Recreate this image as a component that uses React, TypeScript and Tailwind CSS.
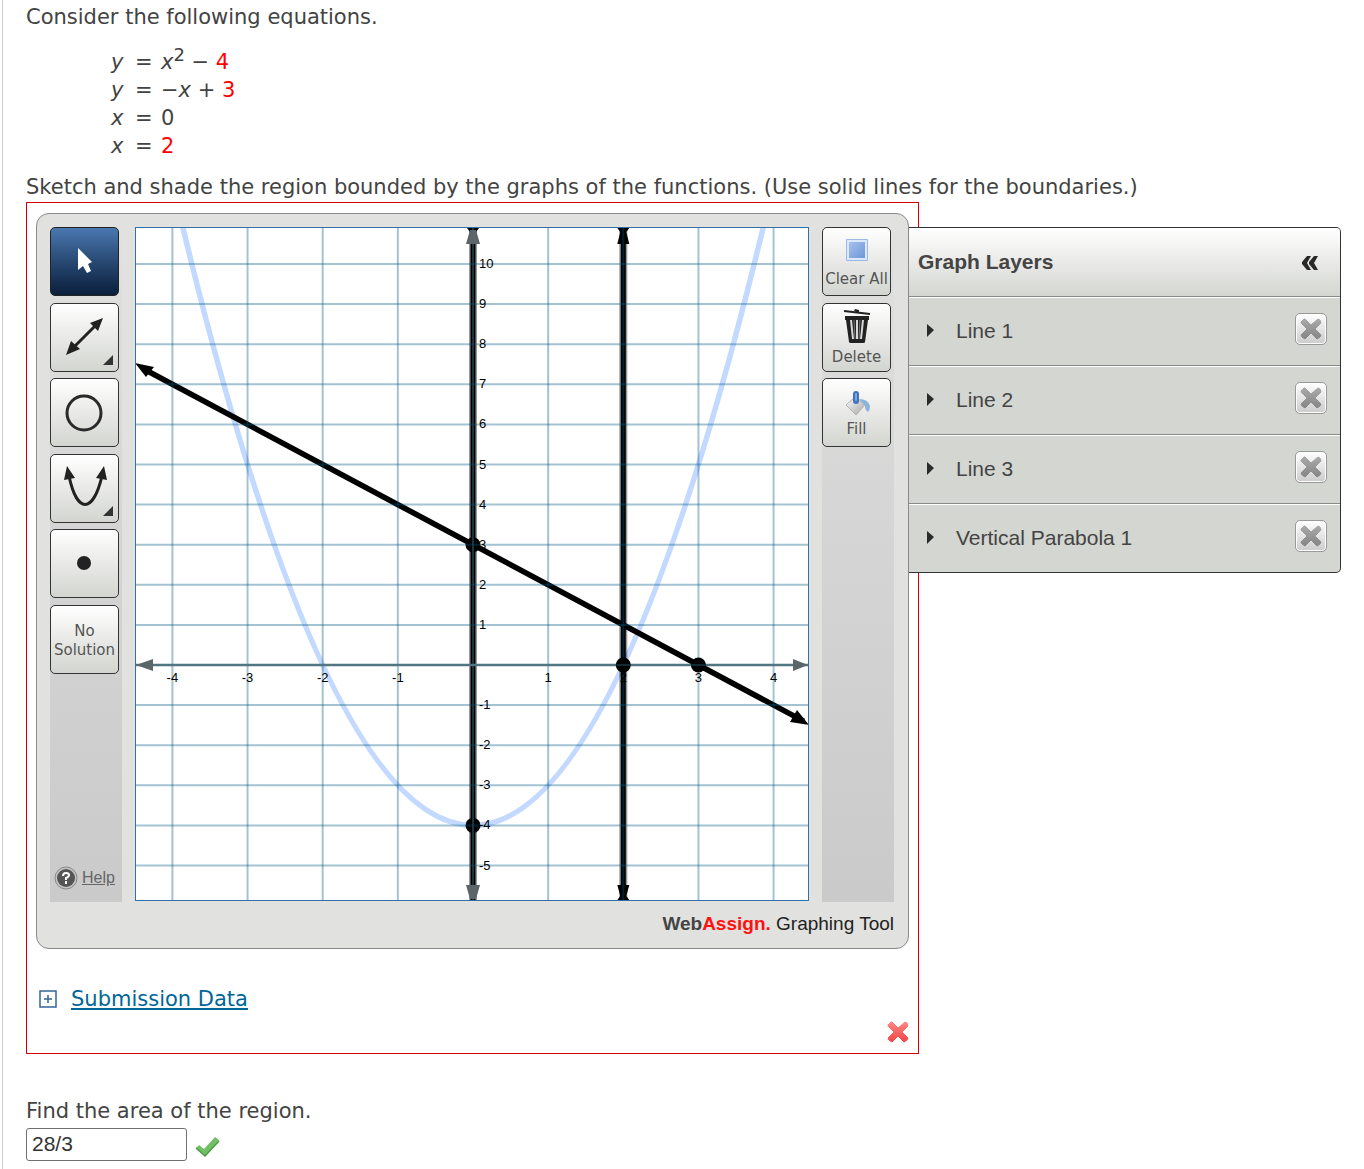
import React from "react";

const ORIGIN_X = 337;
const ORIGIN_Y = 437;
const UNIT_X = 75.15;
const UNIT_Y = 40.1;
const px = (x: number) => ORIGIN_X + x * UNIT_X;
const py = (y: number) => ORIGIN_Y - y * UNIT_Y;

function ToolButton({
  label,
  active = false,
  children,
}: {
  label: string;
  active?: boolean;
  children: React.ReactNode;
}) {
  return (
    <button
      type="button"
      aria-label={label}
      className={
        active
          ? "flex h-[69px] w-[69px] flex-col items-center justify-center rounded-[5px] border border-[#222] bg-linear-to-b from-[#4a78b0] to-[#0a1f3c]"
          : "flex h-[69px] w-[69px] flex-col items-center justify-center rounded-[5px] border border-[#333] bg-linear-to-b from-white to-[#d3d5d0] text-[15px] leading-[19px] whitespace-nowrap text-[#555]"
      }
    >
      {children}
    </button>
  );
}

function PointerIcon() {
  return (
    <svg width="67" height="67" viewBox="0 0 67 67">
      <path d="M27 20 V42 L32 38 L36 45 L40 43 L37 36 L41 34 Z" fill="#fff" />
    </svg>
  );
}

function LineIcon() {
  return (
    <svg width="67" height="67" viewBox="0 0 67 67" fill="#222">
      <path d="M21 45 L47 19" stroke="#222" strokeWidth="3" />
      <path d="M52 14 L39 19 L47 27 Z M15 51 L20 37 L29 45 Z" />
      <path d="M62 51 V61 H52 Z" fill="#333" />
    </svg>
  );
}

function CircleIcon() {
  return (
    <svg width="67" height="67" viewBox="0 0 67 67">
      <circle cx="33" cy="34" r="17" fill="none" stroke="#2a2a2a" strokeWidth="3" />
    </svg>
  );
}

function ParabolaIcon() {
  return (
    <svg width="67" height="67" viewBox="0 0 67 67" fill="#222">
      <path d="M18 21 C26 59 42 59 51 21" fill="none" stroke="#222" strokeWidth="3" />
      <path d="M16 11 L13 25 L24 23 Z M53 11 L45 23 L56 25 Z" />
      <path d="M62 51 V61 H52 Z" fill="#333" />
    </svg>
  );
}

function PointIcon() {
  return (
    <svg width="67" height="67" viewBox="0 0 67 67">
      <circle cx="33" cy="33" r="7" fill="#222" />
    </svg>
  );
}

function ClearIcon() {
  return (
    <svg width="24" height="24" viewBox="0 0 24 24">
      <defs>
        <linearGradient id="clearFill" x1="0" y1="0" x2="1" y2="1">
          <stop offset="0" stopColor="#a5c0ee" />
          <stop offset="1" stopColor="#6f97d6" />
        </linearGradient>
      </defs>
      <rect x="1" y="1" width="22" height="22" rx="1" fill="#9db8e4" />
      <rect x="2" y="2" width="20" height="20" fill="#dce8fb" />
      <rect x="4" y="4" width="16" height="16" fill="url(#clearFill)" />
    </svg>
  );
}

function TrashIcon() {
  return (
    <svg width="28" height="36" viewBox="0 0 28 36">
      <path d="M1 3 L27 6" stroke="#222" strokeWidth="2" />
      <path d="M11 3 L12 1 L16 2 L16 5" fill="#222" />
      <path d="M2 8 H26 V12 H25 L22 34 Q22 35 20 35 H8 Q6 35 6 34 L3 12 H2 Z" fill="#222" />
      <path d="M8 12 L10 31 M14 12 V31 M20 12 L18 31" stroke="#d8d8d8" strokeWidth="2" />
      <path d="M11 12 L12 31 M17 12 L16 31" stroke="#777" strokeWidth="1" />
    </svg>
  );
}

function FillIcon() {
  return (
    <svg width="28" height="26" viewBox="0 0 28 26">
      <defs>
        <linearGradient id="bucket" x1="0" y1="0" x2="1" y2="1">
          <stop offset="0" stopColor="#fff" />
          <stop offset="1" stopColor="#a5a5a5" />
        </linearGradient>
      </defs>
      <path d="M16 9 Q25 9 27 16 Q27 20 25 22 Q22 20 22 16 Z" fill="#8ab4dc" />
      <path d="M3 15 L12 7 L22 15 L13 25 Z" fill="url(#bucket)" stroke="#b3b3b3" />
      <rect x="10" y="1" width="6" height="13" rx="3" fill="#3f74c0" />
      <rect x="12" y="3" width="2" height="8" rx="1" fill="#7aa7e4" />
    </svg>
  );
}

function CrossIcon({ tone }: { tone: "red" | "gray" }) {
  const id = "cross-" + tone;
  return (
    <svg width="22" height="22" viewBox="0 0 22 22">
      <defs>
        <linearGradient id={id} x1="0" y1="0" x2="0" y2="1">
          <stop offset="0" stopColor={tone === "red" ? "#ff8585" : "#a9a9a9"} />
          <stop offset="1" stopColor={tone === "red" ? "#f04444" : "#858585"} />
        </linearGradient>
      </defs>
      <path
        d="M4 1 L1 4 Q1 6 2 6 L7 11 L1 17 L2 19 L5 21 L11 15 L17 21 L20 19 L21 17 L15 11 L21 5 L20 2 L18 1 L11 7 L5 1 Z"
        fill={"url(#" + id + ")"}
        stroke={"url(#" + id + ")"}
        strokeWidth="1"
        strokeLinejoin="round"
      />
    </svg>
  );
}

function CheckIcon() {
  return (
    <svg width="26" height="22" viewBox="0 0 26 22">
      <path d="M1 12 L4 9 L9 13 L20 1 L24 4 L10 20 Z" fill="#72bf66" />
      <path d="M1 12 L10 20 L24 5" fill="none" stroke="#479a3b" strokeWidth="1.5" />
    </svg>
  );
}

function Graph() {
  const xs = [-4, -3, -2, -1, 1, 2, 3, 4];
  const ys = [-5, -4, -3, -2, -1, 1, 2, 3, 4, 5, 6, 7, 8, 9, 10];
  return (
    <div className="border border-[#3470a8] bg-white">
      <svg viewBox="0 0 672 672" className="block h-auto w-[672px]" role="img" aria-label="Graph">
        <path
          d={`M${px(-4)} ${py(12)} Q${px(0)} ${py(-20)} ${px(4)} ${py(12)}`}
          fill="none"
          stroke="#c3d9ff"
          strokeWidth="5.5"
        />
        <g stroke="#000">
          <path d={`M${px(0)} 0 V672 M${px(2)} 0 V672`} strokeWidth="8" strokeOpacity="0.4" />
          <path d={`M${px(0)} 0 V672 M${px(2)} 0 V672`} strokeWidth="5" />
          <path d={`M${px(-4.4)} ${py(7.4)} L${px(4.4)} ${py(-1.4)}`} strokeWidth="5.6" />
        </g>
        <g fill="#000">
          <path d="M-1 135 L18 139 L10 149 Z M673 497 L654 494 L661 482 Z" />
          <path d={`M${px(2) - 6} 0 h12 l-3 4 l3 12 h-12 l3 -12 Z`} />
          <path d={`M${px(2) - 6} 657 h12 l-3 11 l3 4 h-12 l3 -4 Z`} />
          <path d={`M${px(0) - 6} 0 h12 l-3 4 h-6 Z`} />
          <circle cx={px(0)} cy={py(3)} r="7.5" />
          <circle cx={px(0)} cy={py(-4)} r="7.5" />
        </g>
        <g stroke="#005a82" strokeOpacity="0.36" strokeWidth="2">
          {xs.map((x) => (
            <path key={x} d={`M${px(x)} 0 V672`} />
          ))}
          {ys.map((y) => (
            <path key={y} d={`M0 ${py(y)} H672`} />
          ))}
        </g>
        <path d={`M${px(0)} 0 V672`} stroke="#1f4654" strokeWidth="1.5" />
        <path d="M0 437 H672" stroke="#517681" strokeWidth="2.4" />
        <circle cx={px(2)} cy={py(0)} r="7.5" />
        <circle cx={px(3)} cy={py(0)} r="7.5" />
        <path
          d={`M${px(2) - 7} 437 h14 M${px(3) - 7} 437 h14`}
          stroke="#1f4654"
          strokeOpacity="0.6"
          strokeWidth="2"
        />
        <g fill="#5c6669">
          <path d="M0 437 L17 431 V443 Z M672 437 L657 431 V443 Z" />
          <path d="M334 2 h6 l4 14 h-14 Z M330 657 h14 l-4 14 h-6 Z" />
        </g>
        <g fontFamily="Liberation Sans, Arial, sans-serif" fontSize="13" fill="#000">
          {xs.map((x) => (
            <text key={x} x={px(x)} y="454" textAnchor="middle">
              {x}
            </text>
          ))}
          {ys.map((y) => (
            <text key={y} x="343" y={py(y) + 4}>
              {y}
            </text>
          ))}
        </g>
      </svg>
    </div>
  );
}

function GraphLayers() {
  const layers = ["Line 1", "Line 2", "Line 3", "Vertical Parabola 1"];
  return (
    <section className="absolute top-[13px] left-full ml-px w-[432px] overflow-hidden rounded-r-[5px] border border-l-0 border-[#333] bg-[#d4d6d1] font-['Liberation_Sans',Arial,sans-serif] text-[21px] text-[#444]">
      <header className="flex h-[68px] items-center justify-between bg-linear-to-b from-white to-[#d4d6d1] pr-[22px] pl-[9px]">
        <h2 className="font-bold">Graph Layers</h2>
        <button type="button" aria-label="Collapse layers" className="pt-[2px]">
          <svg width="16" height="14" viewBox="0 0 16 14" fill="#2a2a2a">
            <path d="M5 0 H9 L5 7 L9 14 H5 L0 8 V6 Z M12 0 H16 L12 7 L16 14 H12 L7 8 V6 Z" />
          </svg>
        </button>
      </header>
      <ul>
        {layers.map((name) => (
          <li
            key={name}
            className="flex items-center justify-between border-t border-[#8a8a8a] pr-[13px] pl-[17px] shadow-[inset_0_1px_0_#fff]"
          >
            <button type="button" className="flex h-[68px] items-center gap-[21px]">
              <svg width="9" height="14" viewBox="0 0 9 14">
                <path d="M1 0 L8 6 L1 13 Z" fill="#2a2a2a" />
              </svg>
              {name}
            </button>
            <button
              type="button"
              aria-label={"Remove " + name}
              className="mb-1 flex h-8 w-8 items-center justify-center rounded-[5px] border border-[#999] bg-linear-to-b from-white to-[#ccc] shadow-[inset_0_0_0_1px_#fff]"
            >
              <CrossIcon tone="gray" />
            </button>
          </li>
        ))}
      </ul>
    </section>
  );
}

function GraphingTool() {
  return (
    <div className="relative w-[873px] rounded-[13px] border border-[#8a8a8a] bg-[#e1e1df] pt-[13px] pr-[14px] pl-[13px]">
      <div className="flex items-stretch justify-between">
        <div className="flex w-[72px] flex-col justify-between bg-linear-to-b from-[#e1e1df] via-[#d6d6d6] via-40% to-[#cacaca]">
          <div className="flex h-[447px] flex-col justify-between">
            <ToolButton label="Select" active>
              <PointerIcon />
            </ToolButton>
            <ToolButton label="Line">
              <LineIcon />
            </ToolButton>
            <ToolButton label="Circle">
              <CircleIcon />
            </ToolButton>
            <ToolButton label="Parabola">
              <ParabolaIcon />
            </ToolButton>
            <ToolButton label="Point">
              <PointIcon />
            </ToolButton>
            <ToolButton label="No Solution">
              <span className="pt-1">No</span>
              <span>Solution</span>
            </ToolButton>
          </div>
          <a
            href="#help"
            className="mb-3 ml-1 flex items-center gap-1 font-['Liberation_Sans',Arial,sans-serif] text-base text-[#666]"
          >
            <svg width="24" height="24" viewBox="0 0 24 24">
              <circle cx="12" cy="12" r="11" fill="#c4c4c4" stroke="#888" />
              <circle cx="12" cy="12" r="9" fill="#555" />
              <path
                d="M9 10 Q9 7 12 7 Q15 7 15 9 Q15 11 12 12 V14 M12 15 V18"
                fill="none"
                stroke="#fff"
                strokeWidth="2"
              />
            </svg>
            <span className="underline">Help</span>
          </a>
        </div>
        <div className="pb-px">
          <Graph />
        </div>
        <div className="w-[72px] bg-linear-to-b from-[#e1e1df] via-[#d6d6d6] via-40% to-[#cacaca]">
          <div className="flex h-[220px] flex-col justify-between">
            <ToolButton label="Clear All">
              <span className="pt-1">
                <ClearIcon />
              </span>
              <span className="pt-2">Clear All</span>
            </ToolButton>
            <ToolButton label="Delete">
              <TrashIcon />
              <span className="pt-1">Delete</span>
            </ToolButton>
            <ToolButton label="Fill">
              <span className="pt-1">
                <FillIcon />
              </span>
              <span className="pt-1">Fill</span>
            </ToolButton>
          </div>
        </div>
      </div>
      <p className="h-[46px] text-right font-['Liberation_Sans',Arial,sans-serif] text-[19px] leading-[44px] text-[#222]">
        <b className="text-[#444]">Web</b>
        <b className="text-[#f11]">Assign.</b> Graphing Tool
      </p>
      <GraphLayers />
    </div>
  );
}

function Equation({ left, children }: { left: string; children: React.ReactNode }) {
  return (
    <div className="flex h-7 items-center">
      <i className="w-6">{left}</i>
      <span className="w-[26px]">=</span>
      <span>{children}</span>
    </div>
  );
}

export default function App() {
  return (
    <main className="ml-[2px] min-h-screen border-l border-[#ccc] bg-white pl-[23px] font-['DejaVu_Sans',Verdana,sans-serif] text-[21px] text-[#434343]">
      <p className="pt-[3px] leading-7">Consider the following equations.</p>
      <div className="mt-[18px] ml-[85px]">
        <Equation left="y">
          <i>x</i>
          <sup className="-top-2 text-[18px]">2</sup> − <span className="text-[#f00]">4</span>
        </Equation>
        <Equation left="y">
          −<i>x</i> + <span className="text-[#f00]">3</span>
        </Equation>
        <Equation left="x">0</Equation>
        <Equation left="x">
          <span className="text-[#f00]">2</span>
        </Equation>
      </div>
      <p className="mt-3 leading-7">
        Sketch and shade the region bounded by the graphs of the functions. (Use solid lines for the boundaries.)
      </p>
      <div className="mt-px w-fit border border-[#d00000] px-[9px] pt-[10px] pb-[10px]">
        <GraphingTool />
        <div className="mt-9 flex items-center gap-[14px] pl-[3px] leading-7">
          <svg width="18" height="18" viewBox="0 0 18 18" fill="none" stroke="#336699">
            <rect x="1" y="1" width="16" height="16" strokeWidth="1.5" />
            <path d="M5 9 H13 M9 5 V13" strokeWidth="1.5" />
          </svg>
          <a href="#submission" className="text-[#069] underline decoration-2 underline-offset-2">
            Submission Data
          </a>
        </div>
        <div className="mt-2 flex justify-end">
          <CrossIcon tone="red" />
        </div>
      </div>
      <label htmlFor="area" className="mt-[43px] block leading-7">
        Find the area of the region.
      </label>
      <div className="mt-[3px] flex items-center gap-2">
        <input
          id="area"
          defaultValue="28/3"
          className="h-[33px] w-[161px] rounded-[3px] border border-[#707070] px-[5px] pb-[2px] font-['Liberation_Sans',Arial,sans-serif] text-[21px] text-[#333]"
        />
        <span className="pt-1">
          <CheckIcon />
        </span>
      </div>
    </main>
  );
}
